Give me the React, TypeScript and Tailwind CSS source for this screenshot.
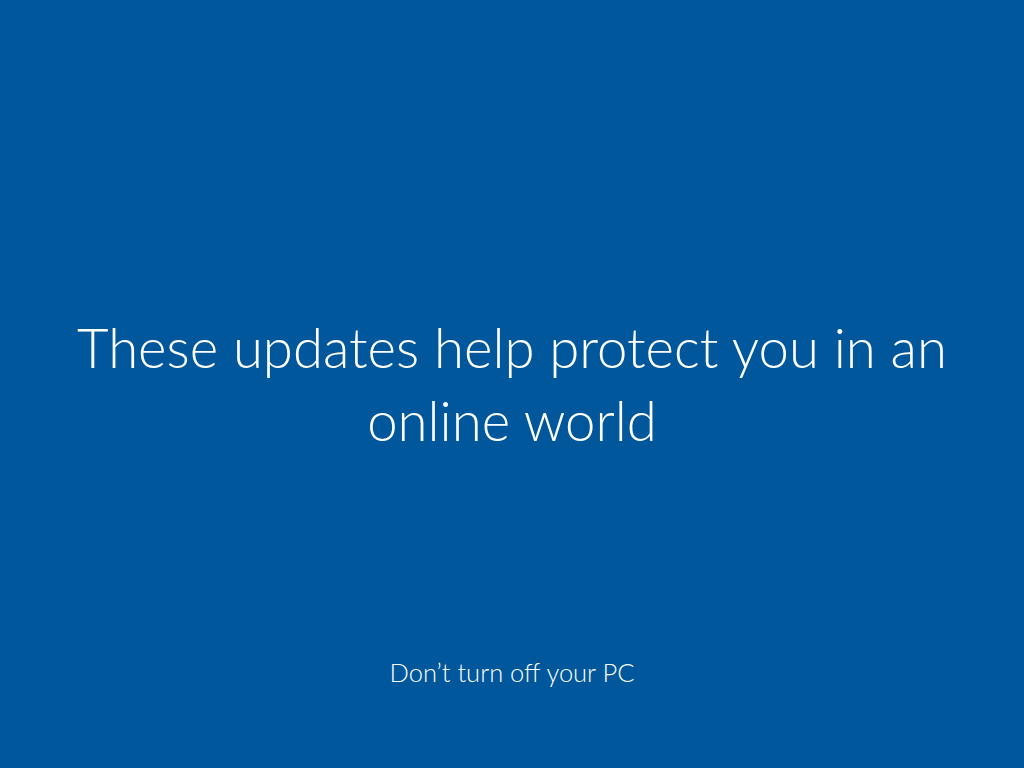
import React from 'react';

const App: React.FC = () => {
  return (
    <div
      className="flex flex-col w-full h-screen bg-[#00579b] text-white"
      style={{ fontFamily: 'Lato, "Open Sans", sans-serif' }}
    >
      {/* Main message */}
      <div className="flex flex-1 items-center justify-center pt-[112px] px-8">
        <h1 className="text-center text-[54.5px] leading-[73px] font-light whitespace-nowrap">
          These updates help protect you in an
          <br />
          online world
        </h1>
      </div>

      {/* Footer note */}
      <div className="flex justify-center pb-[80px]">
        <p className="text-[25.5px] leading-[32px] font-light">Don’t turn off your PC</p>
      </div>
    </div>
  );
};

export default App;
